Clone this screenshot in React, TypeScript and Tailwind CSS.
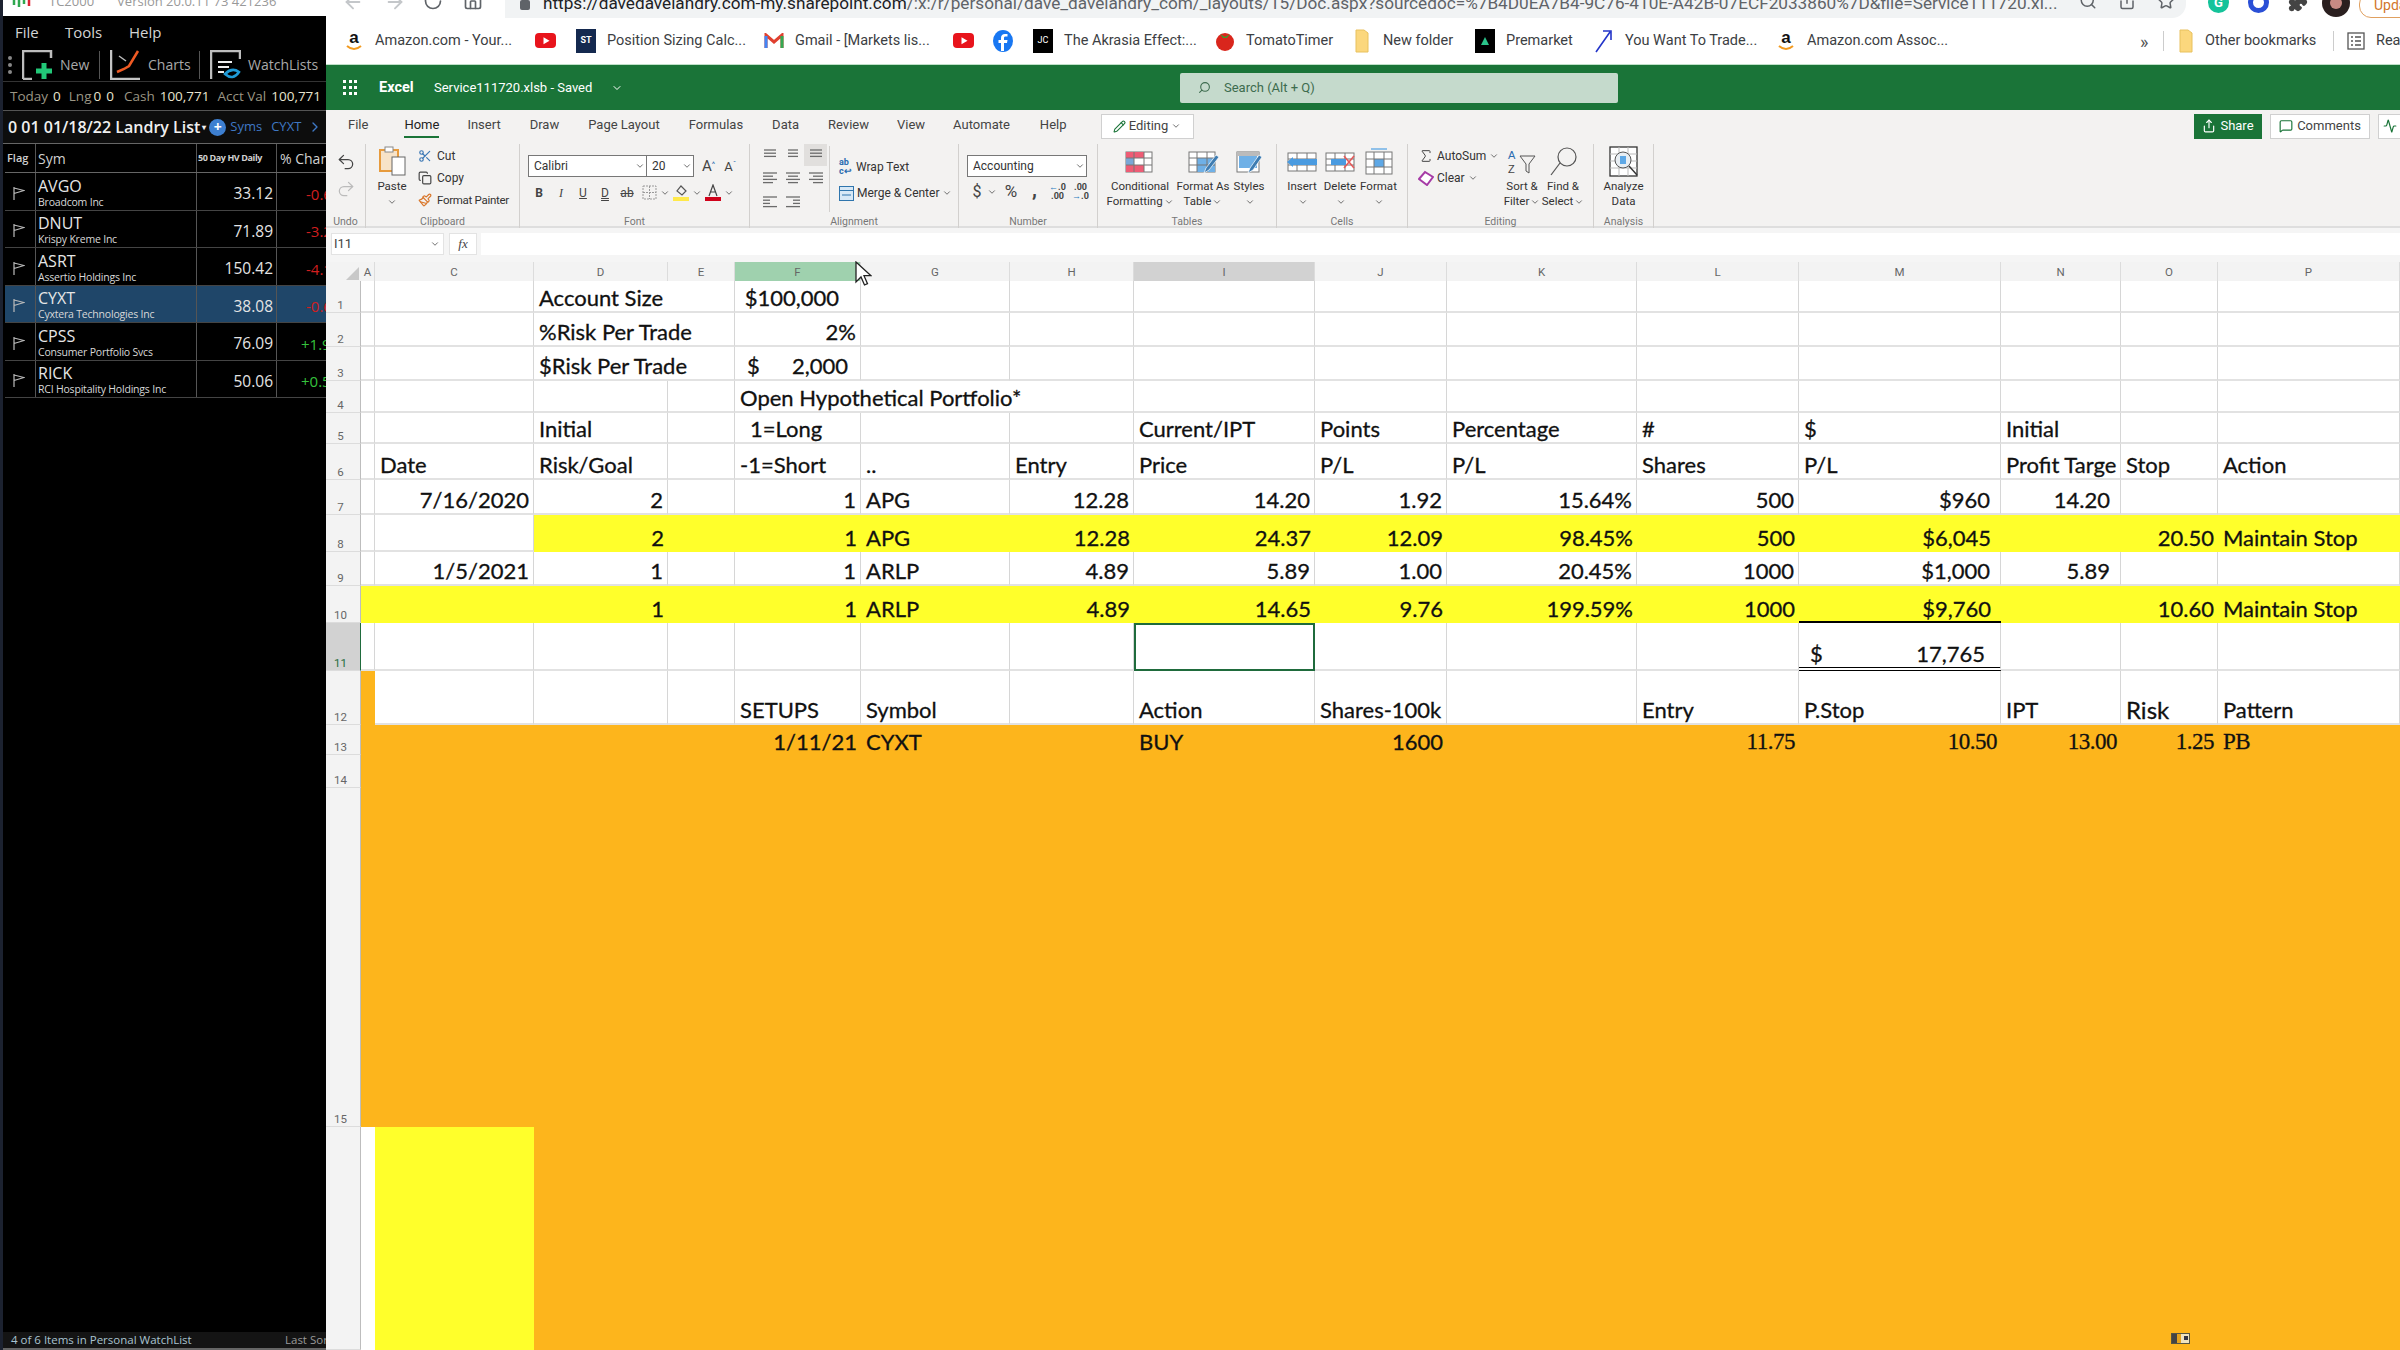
import React from "react";
import {
  ArrowLeft, ArrowRight, RotateCw, Home, Search, Share, Star, Puzzle, ChevronDown, Pencil,
  Undo2, Redo2, Scissors, Copy, Paintbrush, MessageSquare, Activity, ChevronRight, Sigma,
} from "lucide-react";

const Chev = ({ c = "" }: { c?: string }) => <ChevronDown className={"w-[10px] h-[10px] text-[#555] shrink-0 " + c} strokeWidth={2} />;

function Lines({ rows }: { rows: [number, number][] }) {
  return (
    <svg width="16" height="14" viewBox="0 0 16 14" stroke="#6b6b6b" strokeWidth="1.3">
      {rows.map(([a, b], i) => <line key={i} x1={a} x2={b} y1={2 + i * 3.2} y2={2 + i * 3.2} />)}
    </svg>
  );
}

function AmazonIcon() {
  return (
    <svg width="18" height="24" viewBox="0 0 18 24">
      <text x="9" y="14" textAnchor="middle" fontSize="17" fontWeight="700" fontFamily="Liberation Sans" fill="#111">a</text>
      <path d="M2 17 Q9 23 16 17" fill="none" stroke="#f29a1f" strokeWidth="2" />
    </svg>
  );
}
const Yt = () => <svg width="22" height="16" viewBox="0 0 22 16"><rect width="21" height="15" rx="4" fill="#e8141c" /><path d="M8.5 4.2v7l6-3.5z" fill="#fff" /></svg>;
const Fld = () => <svg width="14" height="24" viewBox="0 0 14 24" className="shrink-0"><path d="M1 1h8l4 3v19H1z" fill="#fbd77d" stroke="#e8c15e" /></svg>;
const Box = ({ children, c }: { children: React.ReactNode; c: string }) => <div className={"w-[20px] h-[24px] flex items-center justify-center text-[9px] " + c}>{children}</div>;

const marks: { w: string; icon: React.ReactNode; text?: string }[] = [
  { w: "w-[192px]", icon: <AmazonIcon />, text: "Amazon.com - Your..." },
  { w: "w-[40px]", icon: <Yt /> },
  { w: "w-[188px]", icon: <Box c="bg-[#14294f] text-white font-bold">ST</Box>, text: "Position Sizing Calc..." },
  { w: "w-[190px]", icon: <svg width="20" height="16" viewBox="0 0 20 16"><path d="M2 15V2l8 7 8-7v13" fill="none" stroke="#e0402f" strokeWidth="3" /><path d="M2 15V3" stroke="#4285f4" strokeWidth="3" /><path d="M18 15V3" stroke="#34a853" strokeWidth="3" /></svg>, text: "Gmail - [Markets lis..." },
  { w: "w-[39px]", icon: <Yt /> },
  { w: "w-[40px]", icon: <svg width="20" height="22" viewBox="0 0 20 22"><ellipse cx="10" cy="11" rx="10" ry="11" fill="#1877f2" /><path d="M11 21v-8h3l.5-3H11V8c0-1 .5-1.5 1.6-1.5H14.5V4h-2.5C9.500 4 8 5.500 8 8v2H5.500v3H8v8z" fill="#fff" /></svg> },
  { w: "w-[182px]", icon: <Box c="bg-black text-white">JC</Box>, text: "The Akrasia Effect:..." },
  { w: "w-[137px]", icon: <svg width="20" height="20" viewBox="0 0 20 20"><circle cx="10" cy="11" r="9" fill="#d9261c" /><path d="M5 3l5 3 5-3-3 4H8z" fill="#3f9a2c" /></svg>, text: "TomatoTimer" },
  { w: "w-[123px]", icon: <Fld />, text: "New folder" },
  { w: "w-[119px]", icon: <Box c="bg-black"><svg width="10" height="10" viewBox="0 0 10 10"><path d="M5 1l4 8H1z" fill="#2bc48a" /></svg></Box>, text: "Premarket" },
  { w: "w-[182px]", icon: <svg width="20" height="24" viewBox="0 0 20 24"><path d="M2 23L16 3M9 2h8v9" fill="none" stroke="#2335c9" strokeWidth="1.6" /></svg>, text: "You Want To Trade..." },
  { w: "w-[364px]", icon: <AmazonIcon />, text: "Amazon.com Assoc..." },
];

const tabs: [string, string][] = [
  ["File", "ml-[22px]"], ["Home", "ml-[36px]"], ["Insert", "ml-[28px]"], ["Draw", "ml-[29px]"], ["Page Layout", "ml-[29px]"],
  ["Formulas", "ml-[29px]"], ["Data", "ml-[29px]"], ["Review", "ml-[29px]"], ["View", "ml-[28px]"], ["Automate", "ml-[28px]"], ["Help", "ml-[30px]"],
];

function Group({ w, label, children }: { w: string; label: string; children: React.ReactNode }) {
  return (
    <div className={"shrink-0 h-[84px] border-r border-[#d2d0ce] flex flex-col " + w}>
      <div className="h-[72px] flex">{children}</div>
      <div className="h-[12px] text-center text-[10.5px] leading-[12px] text-[#777]">{label}</div>
    </div>
  );
}

function Big({ w, icon, a, b, chev }: { w: string; icon: React.ReactNode; a: string; b?: string; chev?: boolean }) {
  return (
    <div className={"shrink-0 flex flex-col items-center text-[11.5px] leading-[15px] text-[#333] " + w}>
      <div className="h-[35px] flex items-center justify-center">{icon}</div>
      <div className="h-[15px] whitespace-nowrap">{a}</div>
      <div className="h-[15px] flex items-center whitespace-nowrap">{b}{chev && <Chev c="ml-[1px]" />}</div>
    </div>
  );
}

function TableIcon({ fill, extra }: { fill: React.ReactNode; extra?: React.ReactNode }) {
  return (
    <svg width="32" height="26" viewBox="0 0 32 26">
      <rect x="2" y="3" width="26" height="20" fill="#fff" stroke="#777" />
      {fill}
      <path d="M2 9h26M2 16h26M10 3v20M20 3v20" stroke="#777" fill="none" />
      {extra}
    </svg>
  );
}
const Brush = () => <path d="M17 24l2-5 10-13 3 2-10 13z" fill="#3e7cb1" stroke="#fff" strokeWidth=".7" />;

function Ribbon() {
  return (
    <div className="h-[86px] bg-[#f3f2f1] border-b-2 border-[#dedede] flex pt-[2px] shrink-0">
      <Group w="w-[40px]" label="Undo">
        <div className="flex flex-col items-center w-full pt-[8px] gap-[7px]">
          <Undo2 className="w-[20px] h-[20px] text-[#444]" strokeWidth={1.5} />
          <Redo2 className="w-[20px] h-[20px] text-[#bbb]" strokeWidth={1.5} />
        </div>
      </Group>
      <Group w="w-[154px]" label="Clipboard">
        <div className="w-[52px] flex flex-col items-center text-[11.5px] text-[#333] leading-[15px] shrink-0">
          <div className="h-[35px] flex items-start pt-[2px]">
            <svg width="28" height="30" viewBox="0 0 28 30"><path d="M2 4h18v21H2z" fill="#f7e3c8" stroke="#e79b3d" strokeWidth="2" /><rect x="7" y="1" width="8" height="5" fill="#fff" stroke="#888" /><rect x="14" y="11" width="13" height="18" fill="#fff" stroke="#666" /></svg>
          </div>
          <div className="h-[15px]">Paste</div>
          <div className="h-[15px] flex items-center"><Chev /></div>
        </div>
        <div className="flex flex-col pt-[1px] text-[12px] leading-[22px] text-[#333] whitespace-nowrap">
          <div className="h-[22px] flex items-center gap-[5px]"><Scissors className="w-[14px] h-[14px] text-[#3c78b5] shrink-0" /> Cut</div>
          <div className="h-[22px] flex items-center gap-[5px]"><Copy className="w-[14px] h-[14px] text-[#444] shrink-0" /> Copy</div>
          <div className="h-[22px] flex items-center gap-[5px] text-[11.5px] tracking-[-0.3px]"><Paintbrush className="w-[14px] h-[14px] text-[#d9772b] shrink-0" /> Format Painter</div>
        </div>
      </Group>
      <Group w="w-[230px]" label="Font">
        <div className="pl-[8px] pt-[11px] flex flex-col gap-[4px]">
          <div className="flex items-center">
            <div className="w-[166px] h-[22px] bg-white border border-[#777] flex text-[12px] leading-[20px] text-[#333]">
              <div className="w-[118px] pl-[5px] border-r border-[#777] flex items-center justify-between pr-[1px]">Calibri <Chev /></div>
              <div className="flex-1 pl-[5px] flex items-center justify-between pr-[1px]">20 <Chev /></div>
            </div>
            <span className="ml-[8px] text-[15px] text-[#444]">A<sup className="text-[8px] text-[#2b6cb0]">^</sup></span>
            <span className="ml-[9px] text-[13px] text-[#444]">A<sup className="text-[8px] text-[#2b6cb0]">ˇ</sup></span>
          </div>
          <div className="flex items-center h-[22px] text-[12px] text-[#444] leading-none">
            <span className="w-[22px] text-center font-bold">B</span>
            <span className="w-[22px] text-center italic font-['Liberation_Serif',serif]">I</span>
            <span className="w-[22px] text-center underline">U</span>
            <span className="w-[22px] text-center underline decoration-double">D</span>
            <span className="w-[22px] text-center line-through">ab</span>
            <span className="w-[22px] flex justify-center"><svg width="15" height="15" viewBox="0 0 15 15" fill="none" stroke="#999" strokeDasharray="2 1"><rect x="1" y="1" width="13" height="13" /><path d="M7.500 1v13M1 7.500h13" /></svg></span>
            <span className="w-[10px]"><Chev /></span>
            <span className="w-[22px] flex justify-center"><svg width="16" height="17" viewBox="0 0 16 17"><path d="M8 2l5 5-4 4-5-4z" fill="none" stroke="#555" strokeWidth="1.2" /><rect y="13" width="16" height="4" fill="#ffe94a" /></svg></span>
            <span className="w-[10px]"><Chev /></span>
            <span className="w-[22px] flex justify-center"><svg width="16" height="17" viewBox="0 0 16 17"><path d="M4 12L8 1l4 11M5.500 8h5" fill="none" stroke="#444" strokeWidth="1.2" /><rect y="13" width="16" height="4" fill="#d0021b" /></svg></span>
            <span className="w-[10px]"><Chev /></span>
          </div>
        </div>
      </Group>
      <Group w="w-[209px]" label="Alignment">
        <div className="pl-[8px] grid grid-cols-[23px_23px_23px] grid-rows-[22px_24px_23px] shrink-0 h-[69px] items-center justify-items-center">
          <Lines rows={[[2, 14], [2, 14], [2, 14]]} />
          <Lines rows={[[3, 13], [3, 13], [3, 13]]} />
          <div className="bg-[#e1dfdd] w-[23px] h-[22px] flex items-center justify-center"><Lines rows={[[2, 14], [2, 14], [2, 14]]} /></div>
          <Lines rows={[[1, 15], [1, 11], [1, 15], [1, 11]]} />
          <Lines rows={[[1, 15], [3, 13], [1, 15], [3, 13]]} />
          <Lines rows={[[1, 15], [5, 15], [1, 15], [5, 15]]} />
          <Lines rows={[[1, 15], [1, 8], [1, 8], [1, 15]]} />
          <Lines rows={[[1, 15], [8, 15], [8, 15], [1, 15]]} />
        </div>
        <div className="ml-[2px] h-[66px] mt-[2px] border-r border-[#d2d0ce]" />
        <div className="pl-[9px] pt-[12px] flex flex-col gap-[4px] text-[12px] leading-[22px] text-[#333]">
          <div className="h-[22px] flex items-center gap-[3px] whitespace-nowrap"><span className="text-[9px] leading-[9px] w-[14px] text-[#2b6cb0] font-bold">ab<br />c↩</span> Wrap Text</div>
          <div className="h-[22px] flex items-center gap-[3px] whitespace-nowrap"><svg width="15" height="15" viewBox="0 0 15 15"><rect x=".5" y=".5" width="14" height="14" fill="#d7e8f6" stroke="#2f75ad" /><path d="M.500 4.500h14M3 9h9" stroke="#2f75ad" /></svg> Merge &amp; Center <Chev /></div>
        </div>
      </Group>
      <Group w="w-[139px]" label="Number">
        <div className="pl-[8px] pt-[11px] flex flex-col gap-[4px]">
          <div className="w-[120px] h-[22px] bg-white border border-[#777] flex items-center justify-between pl-[5px] pr-[1px] text-[12px] text-[#333]">Accounting <Chev /></div>
          <div className="h-[22px] flex items-center text-[#444]">
            <span className="w-[20px] text-center text-[16px]">$</span>
            <span className="w-[12px]"><Chev /></span>
            <span className="w-[24px] text-center text-[17px]">%</span>
            <span className="w-[23px] text-center text-[20px] leading-[14px] font-bold -mt-[6px]">,</span>
            <span className="w-[23px] text-center text-[9px] leading-[9px] font-bold"><span className="text-[#2b7cc0]">←</span>.0<br />.00</span>
            <span className="w-[23px] text-center text-[9px] leading-[9px] font-bold">.00<br /><span className="text-[#2b7cc0]">→</span>.0</span>
          </div>
        </div>
      </Group>
      <Group w="w-[179px]" label="Tables">
        <div className="w-[11px] shrink-0" />
        <Big w="w-[62px]" icon={<TableIcon fill={<><rect x="2" y="3" width="18" height="6" fill="#ee5c75" /><rect x="2" y="9" width="8" height="7" fill="#7aa7d6" /><rect x="2" y="16" width="18" height="7" fill="#ee5c75" /><rect x="10" y="9" width="10" height="7" fill="#fff" /></>} />} a="Conditional" b="Formatting" chev />
        <div className="w-[4px] shrink-0" />
        <Big w="w-[56px]" icon={<TableIcon fill={<rect x="10" y="9" width="18" height="14" fill="#6fb0e6" />} extra={<Brush />} />} a="Format As" b="Table" chev />
        <Big w="w-[36px]" icon={<svg width="28" height="26" viewBox="0 0 28 26"><rect x="2" y="3" width="22" height="20" fill="#fff" stroke="#777" /><rect x="2" y="3" width="22" height="4" fill="#bbb" /><rect x="4" y="7" width="18" height="12" fill="#6fb0e6" /><path d="M13 24l2-5 9-13 3 2-9 13z" fill="#3e7cb1" stroke="#fff" strokeWidth=".7" /></svg>} a="Styles" chev />
      </Group>
      <Group w="w-[131px]" label="Cells">
        <div className="w-[6px] shrink-0" />
        <Big w="w-[38px]" icon={<svg width="32" height="24" viewBox="0 0 32 24"><rect x="2" y="3" width="28" height="18" fill="#fff" stroke="#777" /><path d="M2 9h28M2 15h28M11 3v18M21 3v18" stroke="#777" /><rect x="6" y="9" width="25" height="6" fill="#4a9be0" /><path d="M1 12l6-5v10z" fill="#4a9be0" /></svg>} a="Insert" chev />
        <Big w="w-[38px]" icon={<svg width="32" height="24" viewBox="0 0 32 24"><rect x="2" y="3" width="28" height="18" fill="#fff" stroke="#777" /><path d="M2 9h28M2 15h28M11 3v18M21 3v18" stroke="#777" /><rect x="7" y="9" width="15" height="6" fill="#4a9be0" /><path d="M20 6l10 12M30 6L20 18" stroke="#e45a5a" strokeWidth="1.6" /></svg>} a="Delete" chev />
        <Big w="w-[39px]" icon={<svg width="30" height="28" viewBox="0 0 30 28"><path d="M7 1h16" stroke="#6fb0e6" strokeWidth="1.5" /><rect x="2" y="4" width="26" height="22" fill="#fff" stroke="#777" /><rect x="10" y="11" width="10" height="8" fill="#5ea8e6" /><path d="M2 11h26M2 19h26M10 4v22M20 4v22" stroke="#777" /></svg>} a="Format" chev />
      </Group>
      <Group w="w-[186px]" label="Editing">
        <div className="w-[84px] ml-[10px] flex flex-col shrink-0 pt-[1px] text-[12px] text-[#333]">
          <div className="h-[22px] flex items-center gap-[3px]"><Sigma className="w-[16px] h-[16px] text-[#444]" strokeWidth={1.5} /> AutoSum <Chev /></div>
          <div className="h-[22px] flex items-center gap-[3px]"><svg width="16" height="16" viewBox="0 0 16 16"><path d="M1 9l6-7 8 5-6 8z" fill="#fff" stroke="#a63ba6" strokeWidth="2" /></svg> Clear <Chev /></div>
        </div>
        <Big w="w-[40px]" icon={<svg width="30" height="30" viewBox="0 0 30 30"><text x="1" y="12" fontSize="11" fontFamily="Liberation Sans" fill="#2b6cb0">A</text><text x="1" y="26" fontSize="11" fontFamily="Liberation Sans" fill="#444">Z</text><path d="M13 9h15l-6 8v9l-3-2v-7z" fill="none" stroke="#555" /></svg>} a="Sort &" b="Filter" chev />
        <Big w="w-[42px]" icon={<svg width="30" height="32" viewBox="0 0 30 32"><circle cx="19" cy="11" r="9" fill="none" stroke="#555" strokeWidth="1.2" /><path d="M12 17L3 29" stroke="#555" strokeWidth="1.2" /></svg>} a="Find &" b="Select" chev />
      </Group>
      <Group w="w-[60px]" label="Analysis">
        <Big w="w-[59px]" icon={<svg width="30" height="32" viewBox="0 0 30 32"><rect x="1" y="1" width="27" height="29" fill="#fff" stroke="#333" strokeWidth="1.3" /><path d="M1 8h27M1 15h27M1 22h27M10 1v29M19 1v29" stroke="#bbb" /><circle cx="14" cy="14" r="8" fill="#e8eef3" stroke="#555" /><rect x="11" y="10" width="6" height="8" fill="#5ea8e6" /><path d="M20 20l8 9" stroke="#333" strokeWidth="1.4" /></svg>} a="Analyze" b="Data" />
      </Group>
    </div>
  );
}

const GRID = "grid grid-cols-[35px_14px_159px_134px_67px_126px_149px_124px_181px_132px_190px_162px_202px_120px_97px_182px]";
const colNames = ["A", "C", "D", "E", "F", "G", "H", "I", "J", "K", "L", "M", "N", "O", "P"];

type Cell = { t?: React.ReactNode; r?: boolean; c?: string; span?: number };
type Row = { n: string; cells: Record<string, Cell> };
const r = (t: string, c = ""): Cell => ({ t, r: true, c });
const l = (t: string, c = ""): Cell => ({ t, c });
const SERIF = "font-['Liberation_Serif',serif] text-[23px] tracking-[-0.5px]";

const rows: Row[] = [
  { n: "1", cells: { D: { t: "Account Size", span: 2 }, F: { t: "$100,000", r: true, c: "pr-[21px]" } } },
  { n: "2", cells: { D: { t: "%Risk Per Trade", span: 2 }, F: r("2%", "pr-[3px]") } },
  { n: "3", cells: { D: { t: "$Risk Per Trade", span: 2 }, F: { t: <span className="flex justify-between w-full pl-[7px] pr-[8px]"><span>$</span><span>2,000</span></span> } } },
  { n: "4", cells: { F: { t: "Open Hypothetical Portfolio*", span: 3 } } },
  { n: "5", cells: { D: l("Initial"), F: l("1=Long", "pl-[15px]"), I: l("Current/IPT"), J: l("Points"), K: l("Percentage"), L: l("#"), M: l("$"), N: l("Initial") } },
  { n: "6", cells: { C: l("Date"), D: l("Risk/Goal"), F: l("-1=Short"), G: l(".."), H: l("Entry"), I: l("Price"), J: l("P/L"), K: l("P/L"), L: l("Shares"), M: l("P/L"), N: l("Profit Targe"), O: l("Stop"), P: l("Action") } },
  { n: "7", cells: { C: r("7/16/2020"), D: r("2"), F: r("1"), G: l("APG"), H: r("12.28"), I: r("14.20"), J: r("1.92"), K: r("15.64%"), L: r("500"), M: r("$960", "pr-[10px]"), N: r("14.20", "pr-[10px]") } },
  { n: "8", cells: { D: r("2"), F: r("1"), G: l("APG"), H: r("12.28"), I: r("24.37"), J: r("12.09"), K: r("98.45%"), L: r("500"), M: r("$6,045", "pr-[10px]"), O: r("20.50"), P: l("Maintain Stop") } },
  { n: "9", cells: { C: r("1/5/2021"), D: r("1"), F: r("1"), G: l("ARLP"), H: r("4.89"), I: r("5.89"), J: r("1.00"), K: r("20.45%"), L: r("1000"), M: r("$1,000", "pr-[10px]"), N: r("5.89", "pr-[10px]") } },
  { n: "10", cells: { D: r("1"), F: r("1"), G: l("ARLP"), H: r("4.89"), I: r("14.65"), J: r("9.76"), K: r("199.59%"), L: r("1000"), M: r("$9,760", "pr-[10px]"), O: r("10.60"), P: l("Maintain Stop") } },
  { n: "11", cells: { M: { t: <span className="flex justify-between w-full pl-[6px] pr-[11px]"><span>$</span><span>17,765</span></span> } } },
  { n: "12", cells: { F: l("SETUPS"), G: l("Symbol"), I: l("Action"), J: l("Shares-100k"), L: l("Entry"), M: l("P.Stop"), N: l("IPT"), O: l("Risk", "text-[24px]"), P: l("Pattern") } },
  { n: "13", cells: { F: r("1/11/21"), G: l("CYXT"), I: l("BUY"), J: r("1600"), L: r("11.75", SERIF), M: r("10.50", SERIF), N: r("13.00", SERIF), O: r("1.25", SERIF), P: l("PB", SERIF) } },
  { n: "14", cells: {} },
  { n: "15", cells: {} },
  { n: "", cells: {} },
];

function cellBg(n: string, col: string): string {
  if (n === "10") return "bg-[#ffff2b] pb-[1px]";
  if (n === "8" && col !== "A" && col !== "C") return "bg-[#ffff2b] pb-[1px]";
  if (n === "12" && col === "A") return "bg-[#fdb51c]";
  if (n === "13" || n === "14" || n === "15") return "bg-[#fdb51c]";
  if (n === "") {
    if (col === "A") return "bg-white";
    if (col === "C") return "bg-[#ffff2b]";
    return "bg-[#fdb51c]";
  }
  return "bg-white border-r border-b-2 border-r-[#d6d6d6] border-b-[#e2e2e2]";
}

function Sheet() {
  return (
    <div className="flex-1 min-h-0 overflow-hidden">
      <div className={GRID + " grid-rows-[32px_34px_34px_32px_31px_36px_35px_37px_34px_37px_48px_54px_30px_33px_339px_223px]"}>
        {rows.map((row) => {
          let skip = 0;
          const hl = row.n === "11";
          return (
            <React.Fragment key={row.n || "x"}>
              <div className={"flex items-end justify-center pr-[5px] text-[11.5px] leading-[14px] border-b border-b-[#dcdcdc] border-r " + (hl ? "bg-[#d2d2d2] text-[#1f6b3c] border-r-[#1f6b3c]" : "bg-[#f3f3f3] text-[#666] border-r-[#bdbdbd]")}>{row.n}</div>
              {colNames.map((col) => {
                if (skip > 0) { skip--; return null; }
                const cell = row.cells[col] || {};
                const span = cell.span || 1;
                skip = span - 1;
                const selected = row.n === "11" && col === "I";
                const m10 = row.n === "10" && col === "M";
                const m11 = row.n === "11" && col === "M";
                return (
                  <div
                    key={col}
                    className={
                      "relative overflow-hidden whitespace-nowrap flex items-end text-[22px] leading-[26px] text-[#111] [-webkit-text-stroke:0.3px_#111] font-['Lato',sans-serif] pl-[5px] pr-[4px] " +
                      (span === 2 ? "col-span-2 " : span === 3 ? "col-span-3 " : "") +
                      (cell.r ? "justify-end " : "") +
                      cellBg(row.n, col) + " " +
                      (selected ? "border-2! border-[#1f6b3c]! " : "") +
                      (m10 ? "shadow-[inset_0_-2px_0_#000] " : "") +
                      (m11 ? "border-b-[4px]! border-double border-b-black! " : "") +
                      (cell.c || "")
                    }
                  >
                    {cell.t}
                  </div>
                );
              })}
            </React.Fragment>
          );
        })}
      </div>
    </div>
  );
}

const wl = [
  { s: "AVGO", n: "Broadcom Inc", v: "33.12", p: "-0.62%", sel: false },
  { s: "DNUT", n: "Krispy Kreme Inc", v: "71.89", p: "-3.21%", sel: false },
  { s: "ASRT", n: "Assertio Holdings Inc", v: "150.42", p: "-4.12%", sel: false },
  { s: "CYXT", n: "Cyxtera Technologies Inc", v: "38.08", p: "-0.65%", sel: true },
  { s: "CPSS", n: "Consumer Portfolio Svcs", v: "76.09", p: "+1.92%", sel: false },
  { s: "RICK", n: "RCI Hospitality Holdings Inc", v: "50.06", p: "+0.53%", sel: false },
];

function LeftPanel() {
  return (
    <div className="w-[326px] shrink-0 h-full bg-black border-l-[3px] border-[#1c2230] flex flex-col font-['Open_Sans',sans-serif] overflow-hidden">
      <div className="h-[16px] bg-white flex items-start overflow-hidden text-[13px] text-[#999] leading-[12px] pl-[9px] gap-[3px] shrink-0">
        <svg width="20" height="8" viewBox="0 0 20 8" className="mr-[14px]"><path d="M2 0v5M7 0v7M12 0v4" stroke="#2fa84f" strokeWidth="2.500" /><path d="M17 0v6" stroke="#d23" strokeWidth="2.500" /></svg>
        <span className="-mt-[5px] mr-[20px] whitespace-nowrap">TC2000</span>
        <span className="-mt-[5px] whitespace-nowrap">Version 20.0.11 73 421236</span>
      </div>
      <div className="h-[32px] flex items-center text-[15px] text-[#d4d4d4] pl-[12px] shrink-0">
        <span className="w-[50px]">File</span><span className="w-[64px]">Tools</span><span>Help</span>
      </div>
      <div className="h-[34px] flex items-center text-[14px] text-[#a9a9a9] shrink-0 border-b border-[#333]">
        <div className="w-[4px] h-[18px] ml-[5px] mr-[10px] flex flex-col justify-between items-center">
          <i className="w-[4px] h-[4px] rounded-full bg-[#888]" /><i className="w-[4px] h-[4px] rounded-full bg-[#888]" /><i className="w-[4px] h-[4px] rounded-full bg-[#888]" />
        </div>
        <svg width="31" height="30" viewBox="0 0 31 30"><path d="M1 29V1h28v7" fill="none" stroke="#bdbdbd" strokeWidth="2.500" /><path d="M1 29h9" stroke="#bdbdbd" strokeWidth="2.500" /><path d="M22 13v16M14 21h16" stroke="#22c878" strokeWidth="5" /></svg>
        <span className="ml-[7px] w-[39px]">New</span>
        <span className="h-[28px] border-r border-[#555] mr-[10px]" />
        <svg width="31" height="30" viewBox="0 0 31 30"><path d="M1 0v29h29" fill="none" stroke="#c4c4c4" strokeWidth="2.500" /><path d="M7 22l7-3 5-3 9-15" fill="none" stroke="#ef5a23" strokeWidth="2.500" /><path d="M9 6l7 5" stroke="#bbb" strokeWidth="1.500" /></svg>
        <span className="ml-[7px] w-[51px]">Charts</span>
        <span className="h-[28px] border-r border-[#555] mr-[10px]" />
        <svg width="31" height="30" viewBox="0 0 31 30"><path d="M1 29V1h29v8" fill="none" stroke="#bdbdbd" strokeWidth="2.500" /><path d="M8 12h14M8 17h11M8 22h6" stroke="#eee" strokeWidth="2" /><path d="M15 24q7-7 14-2-6 9-14 2z" fill="none" stroke="#1f9ad6" strokeWidth="2.500" /></svg>
        <span className="ml-[7px] whitespace-nowrap">WatchLists</span>
      </div>
      <div className="h-[29px] flex items-center text-[13.5px] pl-[7px] whitespace-nowrap text-[#9b9684] border-b border-[#555] shrink-0">
        <span>Today</span><span className="ml-[5px] text-[#e8e4cf]">0</span><span className="ml-[8px]">Lng</span><span className="ml-[2px] text-[#e8e4cf]">0</span><span className="ml-[5px] text-[#e8e4cf]">0</span>
        <span className="ml-[10px]">Cash</span><span className="ml-[5px] text-[#e8e4cf]">100,771</span><span className="ml-[8px]">Acct Val</span><span className="ml-[5px] text-[#e8e4cf]">100,771</span>
      </div>
      <div className="h-[33px] flex items-center pl-[5px] whitespace-nowrap text-[16px] font-semibold text-[#f0f0f0] border-b border-[#666] bg-[#0d0d0d] shrink-0">
        <span>0 01 01/18/22 Landry List</span>
        <span className="text-[8px] ml-[2px] mr-[3px]">▾</span>
        <span className="w-[17px] h-[17px] rounded-full bg-[#3d7fd0] text-white text-[14px] leading-[16px] text-center font-bold shrink-0">+</span>
        <span className="ml-[4px] text-[13px] font-normal text-[#3f78c4]">Syms</span>
        <span className="ml-[9px] text-[13px] font-normal text-[#3f78c4]">CYXT</span>
        <ChevronRight className="ml-[6px] w-[16px] h-[16px] text-[#3f78c4] shrink-0" />
      </div>
      <div className="grid grid-cols-[31px_161px_80px_51px] h-[29px] border-b border-[#666] ml-[2px] shrink-0 text-[#d0d0d0]">
        <div className="border-r border-[#555] text-[11px] font-semibold flex items-center pl-[2px]">Flag</div>
        <div className="border-r border-[#555] text-[14px] flex items-center pl-[2px]">Sym</div>
        <div className="border-r border-[#555] text-[9px] font-bold flex items-center pl-[1px] whitespace-nowrap tracking-[-0.4px]">50 Day HV Daily</div>
        <div className="text-[14px] flex items-center pl-[3px] whitespace-nowrap overflow-hidden">% Change</div>
      </div>
      {wl.map((w) => (
        <div key={w.s} className={"grid grid-cols-[31px_161px_80px_51px] h-[37.500px] border-b border-[#444] ml-[2px] shrink-0 " + (w.sel ? "bg-[#1f4669]" : "")}>
          <div className="border-r border-[#555] flex items-center justify-center pr-[3px] pt-[4px]">
            <svg width="13" height="15" viewBox="0 0 13 15" fill="none" stroke="#bbb" strokeWidth="1.200"><path d="M2 1v13M2 2l10 2.500L2 7.500" /></svg>
          </div>
          <div className="border-r border-[#555] pl-[2px] pt-[4px] flex flex-col justify-center overflow-hidden whitespace-nowrap">
            <span className="text-[16px] leading-[17px] text-[#e6e6e6]">{w.s}</span>
            <span className="text-[10.5px] leading-[14px] tracking-[-0.2px] text-[#d8d8d8]">{w.n}</span>
          </div>
          <div className="border-r border-[#555] flex items-center justify-end pr-[3px] pt-[5px] text-[15.5px] text-[#e4e4e4]">{w.v}</div>
          <div className={"flex items-center pr-0 pt-[5px] text-[15px] whitespace-nowrap overflow-hidden " + (w.p[0] === "-" ? "text-[#d11f1f] pl-[29px]" : "text-[#35c23d] pl-[24px]")}>{w.p}</div>
        </div>
      ))}
      <div className="flex-1" />
      <div className="h-[18px] bg-[#141414] border-b-2 border-[#666] flex items-center justify-between whitespace-nowrap overflow-hidden text-[11.5px] text-[#a9c3d0] pl-[8px] shrink-0">
        <span>4 of 6 Items in Personal WatchList</span>
        <span className="text-[#999] w-[41px] overflow-hidden">Last Sort</span>
      </div>
    </div>
  );
}

export default function App() {
  return (
    <div className="relative w-[2400px] h-[1350px] overflow-hidden flex bg-white font-['Roboto',sans-serif]">
      <LeftPanel />
      <div className="flex-1 min-w-0 h-full flex flex-col">
        {/* browser toolbar */}
        <div className="h-[18px] shrink-0 bg-white flex overflow-hidden text-[#5f6368] items-start">
          <div className="w-[179px] flex items-start shrink-0 pl-[8px] -mt-[9px] h-[24px]">
            <ArrowLeft className="w-[22px] h-[22px] text-[#c4c7ca] ml-[8px]" />
            <ArrowRight className="w-[22px] h-[22px] text-[#c4c7ca] ml-[20px]" />
            <RotateCw className="w-[20px] h-[20px] ml-[17px]" />
            <Home className="w-[20px] h-[20px] ml-[20px]" />
          </div>
          <div className="w-[1681px] h-[18px] bg-[#f1f3f4] rounded-br-[14px] shrink-0 flex items-start pl-[15px] overflow-hidden">
            <span className="w-[10px] h-[10px] bg-[#5f6368] rounded-[2px] mr-[13px] shrink-0" />
            <span className="-mt-[7px] text-[17.200px] leading-[20px] whitespace-nowrap text-[#202124] w-[1515px] overflow-hidden">
              https://davedavelandry.com-my.sharepoint.com<span className="text-[#5f6368]">/:x:/r/personal/dave_davelandry_com/_layouts/15/Doc.aspx?sourcedoc=%7B4D0EA7B4-9C76-410E-A42B-07ECF2033860%7D&amp;file=Service111720.xl...</span>
            </span>
            <div className="flex -mt-[8px] shrink-0 ml-[21px] gap-[21px]">
              <Search className="w-[18px] h-[18px]" /><Share className="w-[18px] h-[18px]" /><Star className="w-[18px] h-[18px]" />
            </div>
          </div>
          <div className="flex items-start -mt-[8px] shrink-0 pl-[22px]">
            <span className="w-[21px] h-[21px] rounded-full bg-[#15c39a] text-white text-[13px] font-bold text-center leading-[21px]">G</span>
            <span className="ml-[19px] w-[21px] h-[21px] rounded-full border-[5px] border-[#2a4fd6] bg-white" />
            <Puzzle className="ml-[19px] w-[20px] h-[20px] text-[#444] fill-[#444]" />
            <span className="ml-[14px] w-[28px] h-[28px] -mt-[3px] rounded-full bg-[#2a1f1f] flex items-center justify-center"><i className="w-[12px] h-[12px] rounded-full bg-[#c98a84]" /></span>
            <span className="ml-[9px] h-[26px] w-[60px] border border-[#e0a060] rounded-[12px] pl-[14px] text-[#d2762b] text-[14px] leading-[24px]">Update</span>
          </div>
        </div>
        {/* bookmarks */}
        <div className="h-[47px] shrink-0 bg-white flex items-center pl-[17px] text-[14.500px] text-[#3c4043] border-b border-[#bfe0c8] whitespace-nowrap overflow-hidden">
          {marks.map((m, i) => (
            <div key={i} className={"shrink-0 flex items-center " + m.w}>
              <span className="w-[22px] flex justify-center shrink-0">{m.icon}</span>
              {m.text && <span className="ml-[10px]">{m.text}</span>}
            </div>
          ))}
          <span className="w-[24px] text-[18px] shrink-0 text-[#555] pl-[1px]">»</span>
          <span className="h-[20px] border-r border-[#ccc] mr-[15px] shrink-0" />
          <span className="flex items-center w-[154px] shrink-0 gap-[12px]"><Fld /> Other bookmarks</span>
          <span className="h-[20px] border-r border-[#ccc] mr-[13px] shrink-0" />
          <svg className="shrink-0" width="18" height="18" viewBox="0 0 18 18" fill="none" stroke="#555" strokeWidth="1.300"><rect x="1" y="1" width="16" height="16" /><path d="M4 5h2M8 5h6M4 9h2M8 9h6M4 13h2M8 13h6" /></svg>
          <span className="ml-[11px]">Reading list</span>
        </div>
        {/* green bar */}
        <div className="h-[45px] shrink-0 bg-[#1a7438] flex items-center text-white relative">
          <div className="ml-[17px] grid grid-cols-3 gap-[3px] w-[14px]">
            {[0, 1, 2, 3, 4, 5, 6, 7, 8].map((i) => <i key={i} className="w-[3px] h-[3px] bg-white" />)}
          </div>
          <span className="ml-[22px] text-[14.500px] font-bold w-[55px]">Excel</span>
          <span className="text-[13px] w-[177px] whitespace-nowrap">Service111720.xlsb - Saved</span>
          <ChevronDown className="w-[12px] h-[12px]" />
          <div className="ml-[557px] w-[438px] h-[30px] rounded-[2px] bg-[#c5dacc] flex items-center pl-[18px] text-[13px] text-[#3d6c4e]">
            <Search className="w-[13px] h-[13px] mr-[13px] -scale-x-100" /> Search (Alt + Q)
          </div>
        </div>
        {/* tabs */}
        <div className="h-[32px] shrink-0 bg-[#f3f2f1] flex items-center text-[13px] text-[#444] relative whitespace-nowrap">
          {tabs.map(([t, c]) => (
            <div key={t} className={"h-full flex items-center relative pb-[2px] " + c + (t === "Home" ? " text-[#222]" : "")}>
              {t}
              {t === "Home" && <i className="absolute left-0 right-0 bottom-[4px] h-[2px] bg-[#1a7438]" />}
            </div>
          ))}
          <div className="ml-[34px] w-[93px] h-[25px] bg-white border border-[#d0d0d0] flex items-center justify-center gap-[3px] text-[#444]">
            <Pencil className="w-[13px] h-[13px] text-[#1a7438]" /> Editing <Chev />
          </div>
          <div className="ml-auto flex items-center gap-[8px] -mr-[1px]">
            <div className="w-[68px] h-[25px] bg-[#1a7438] text-white flex items-center justify-center gap-[4px]"><Share className="w-[14px] h-[14px]" /> Share</div>
            <div className="w-[100px] h-[25px] bg-white border border-[#d0d0d0] flex items-center justify-center gap-[4px]"><MessageSquare className="w-[14px] h-[14px] text-[#1a7438]" /> Comments</div>
            <div className="w-[23px] h-[25px] bg-white border border-[#d0d0d0] flex items-center pl-[4px]"><Activity className="w-[14px] h-[14px] text-[#1a7438]" /></div>
          </div>
        </div>
        <Ribbon />
        {/* formula bar */}
        <div className="h-[34px] shrink-0 bg-[#f5f5f5] pt-[5px] pl-[5px] flex items-start text-[13px] text-[#444]">
          <div className="w-[113px] h-[22px] bg-white border border-[#e3e3e3] flex items-center justify-between pl-[2px] pr-[3px]">I11 <Chev /></div>
          <div className="ml-[5px] w-[28px] h-[22px] bg-white border border-[#e3e3e3] flex items-center justify-center italic font-['Liberation_Serif',serif] text-[13px]">fx</div>
          <div className="ml-[4px] flex-1 h-[22px] bg-white" />
        </div>
        {/* column headers */}
        <div className={GRID + " h-[19px] shrink-0"}>
          <div className="bg-[#f3f3f3] flex items-end justify-end pr-[2px] pb-[1px] border-b-2 border-[#bdbdbd]">
            <svg width="13" height="13" viewBox="0 0 13 13"><path d="M13 0v13H0z" fill="#c8c8c8" /></svg>
          </div>
          {colNames.map((c) => (
            <div key={c} className={"flex items-center justify-center pt-[2px] text-[11.500px] text-[#666] border-r border-r-[#dcdcdc] border-b-2 border-b-[#bdbdbd] " + (c === "F" ? "bg-[#9fd1ae]" : c === "I" ? "bg-[#d2d2d2] border-b-[#1f6b3c] text-[#1f6b3c]" : "bg-[#f3f3f3]")}>{c}</div>
          ))}
        </div>
        <Sheet />
      </div>
      {/* mouse cursor and sheet view marker lying above the page */}
      <svg className="absolute left-[855px] top-[261px]" width="17" height="26" viewBox="0 0 17 26">
        <path d="M1 1v20l5-5 3.500 8 3-1.300-3.500-8h7z" fill="#fff" stroke="#222" strokeWidth="1.300" />
      </svg>
      <div className="absolute left-[2171px] top-[1333px] w-[19px] h-[11px] bg-[#f0e3c0] border border-[#554] flex">
        <i className="w-[5px] h-full bg-[#444]" /><i className="w-[4px] h-full bg-[#e5a21c]" /><i className="ml-[3px] mt-[2px] w-[4px] h-[4px] bg-[#334]" />
      </div>
    </div>
  );
}
